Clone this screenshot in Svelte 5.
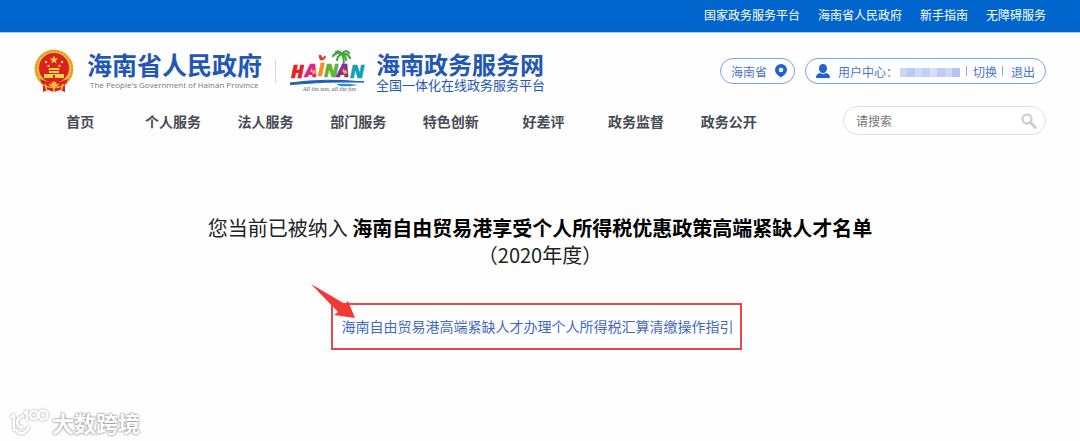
<script>
  let keyword = "";

  const topLinks = ["国家政务服务平台", "海南省人民政府", "新手指南", "无障碍服务"];

  const navItems = [
    "首页",
    "个人服务",
    "法人服务",
    "部门服务",
    "特色创新",
    "好差评",
    "政务监督",
    "政务公开"
  ];

  const letters = [
    { char: "H", x: 1, y: 29, color: "#e5202b" },
    { char: "A", x: 15, y: 28, color: "#e0218a" },
    { char: "I", x: 28, y: 27, color: "#f58a1f" },
    { char: "N", x: 34, y: 28, color: "#5cb531" },
    { char: "A", x: 47, y: 28, color: "#8a2a90" },
    { char: "N", x: 60, y: 29, color: "#12a0b4" }
  ];

  // mosaic over the account name
  const mosaic = ["#c9d6f5", "#bccbf3", "#cfdaf7", "#c3cff3", "#d6e0f8", "#bfcdf2", "#ccd8f6", "#b4c6f1"];
</script>

<div class="topbar">
  {#each topLinks as link}
    <a href="#top">{link}</a>
  {/each}
</div>

<header>
  <div class="brand-row">
    <svg class="emblem" viewBox="0 0 40 44" aria-hidden="true">
      <path d="M9 33 L31 33 L31 43 L26 41 L20 43 L14 41 L9 43 Z" fill="#d8201f" />
      <circle cx="20" cy="20" r="19.5" fill="#e9b53c" />
      <circle cx="20" cy="20" r="18" fill="none" stroke="#c9821d" stroke-width="1" stroke-dasharray="2 1.5" />
      <circle cx="20" cy="19" r="15" fill="#dc1f1f" />
      <path d="M20 6.500l1.100 3h3.200l-2.500 2 .9 3-2.700-1.800-2.700 1.800.9-3-2.500-2h3.200z" fill="#f9d54a" />
      <g fill="#f9d54a">
        <circle cx="12" cy="13" r="1.300" />
        <circle cx="28" cy="13" r="1.300" />
        <circle cx="14.500" cy="17" r="1.200" />
        <circle cx="25.500" cy="17" r="1.200" />
        <path d="M14 21 L15.500 19 H24.500 L26 21 Z" />
        <path d="M15 22 H25 V24 H15 Z" />
        <path d="M10 25 H30 V29 H10 Z" />
      </g>
      <path d="M19 26 H21 V29 H19 Z" fill="#dc1f1f" />
      <path d="M6 30 Q20 37 34 30 L32 35 Q20 40 8 35 Z" fill="#dc1f1f" />
      <path d="M11 35 L13 42 M20 34 V43 M29 35 L27 42 M15 35 Q20 39 25 35" fill="none" stroke="#f3c446" stroke-width="1.500" />
      <circle cx="20" cy="35" r="2.500" fill="#f3c446" />
    </svg>

    <div class="brand gov">
      <strong>海南省人民政府</strong>
      <span>The People's Government of Hainan Province</span>
    </div>

    <svg class="hainan" viewBox="0 0 78 44" role="img" aria-label="Hainan">
      <path d="M0 34 Q36 29 74 33 Q36 32 0 35.500 Z" fill="#1b5fb4" stroke="#1b5fb4" />
      <path d="M46 35 Q56 34 68 36 Q58 38 50 37 Z" fill="#2d8fd0" />
      <path d="M53 17 Q55 11 52 5" fill="none" stroke="#4aa337" stroke-width="2" />
      <path
        d="M52 5 Q47 2 43 7 M52 5 Q48 6 47 11 M52 5 Q55 0 59 4 M52 5 Q58 4 60 9 M52 5 Q56 7 56 11 M52 5 Q49 1 46 3"
        fill="none"
        stroke="#43a83a"
        stroke-width="2.200"
        stroke-linecap="round"
      />
      <path d="M29 9 Q28 5 31 6 L33 9 Q35 5 36 8 Q34 12 30 11 Z" fill="#e43a2a" />
      {#each letters as letter}
        <text class="letter" x={letter.x} y={letter.y} fill={letter.color} stroke={letter.color}>{letter.char}</text>
      {/each}
      <circle cx="24" cy="23" r="2" fill="#f6b21d" />
      <circle cx="55" cy="23" r="2" fill="#f6b21d" />
      <text class="tagline" x="13" y="42">All the sun, all the fun</text>
    </svg>

    <div class="brand service">
      <strong>海南政务服务网</strong>
      <span>全国一体化在线政务服务平台</span>
    </div>

    <div class="account">
      <button class="pill region">
        海南省
        <svg class="pin" viewBox="0 0 12 14" aria-hidden="true">
          <path
            d="M6 0a6 6 0 0 1 6 6c0 3-2.500 5-6 7.500C2.500 11 0 9 0 6a6 6 0 0 1 6-6zM6 3.700a2.300 2.300 0 1 0 0 4.600 2.300 2.300 0 0 0 0-4.600z"
            fill="#1f62d0"
            fill-rule="evenodd"
          />
        </svg>
      </button>
      <div class="pill user">
        <svg class="person" viewBox="0 0 14 14" aria-hidden="true">
          <path
            d="M7 0c2.500 0 4 1.800 4 4.200S9.500 9 7 9 3 6.600 3 4.200 4.500 0 7 0zM0 14c0-3 1.500-4.500 4-5 1.500 1.300 4.500 1.300 6 0 2.500.5 4 2 4 5z"
            fill="#1f62d0"
          />
        </svg>
        <span class="center">用户中心：</span>
        <span class="name">
          {#each mosaic as color}
            <i style="background: {color}"></i>
          {/each}
        </span>
        <span class="bar"></span>
        <a href="#switch">切换</a>
        <span class="bar"></span>
        <a class="exit" href="#exit">退出</a>
      </div>
    </div>
  </div>

  <div class="nav-row">
    <nav>
      {#each navItems as item}
        <a href="#nav">{item}</a>
      {/each}
    </nav>
    <form class="search">
      <input type="text" aria-label="请搜索" placeholder="请搜索" bind:value={keyword} />
      <button type="button" aria-label="搜索">
        <svg viewBox="0 0 16 16">
          <circle cx="6" cy="6" r="4.500" fill="none" stroke="#cfd1d3" stroke-width="2.500" />
          <path d="M9.500 9.500 L14.300 14.300" stroke="#cfd1d3" stroke-width="3.200" stroke-linecap="round" />
        </svg>
      </button>
    </form>
  </div>
</header>

<main>
  <h1>您当前已被纳入 <b>海南自由贸易港享受个人所得税优惠政策高端紧缺人才名单</b><br />（2020年度）</h1>

  <div class="guide">
    <a href="#guide">海南自由贸易港高端紧缺人才办理个人所得税汇算清缴操作指引</a>
    <svg class="arrow" viewBox="0 0 46 36" aria-hidden="true">
      <path d="M0 0 L34 20 L37 17 L44 34 L23 31 L27 28 Z" fill="#f23a35" />
    </svg>
  </div>
</main>

<div class="watermark">
  <svg viewBox="0 0 40 28" aria-hidden="true">
    <g fill="none" stroke="#fff" stroke-width="2.600" stroke-linecap="round" stroke-linejoin="round">
      <path d="M2 9 L5 7 V22" />
      <path d="M14 8 Q8 10 8 15 Q9 19 13 19" />
      <path d="M7 22 Q13 30 20 19" />
      <path d="M16 5 L18 3 V12" />
      <circle cx="25" cy="7" r="4" />
      <circle cx="34" cy="7" r="4.500" />
    </g>
  </svg>
  <span>大数跨境</span>
</div>

<style>
  :global(body) {
    background: #fefefe;
    font-family: "Noto Sans CJK SC", sans-serif;
    font-size: 12px;
  }

  :global(#app) {
    position: relative;
    min-height: 100vh;
  }

  a {
    color: inherit;
    text-decoration: none;
  }

  .topbar {
    display: flex;
    justify-content: flex-end;
    gap: 18px;
    padding: 0 34px 2px;
    line-height: 30px;
    background: #0065cd;
    border-bottom: 1px solid #a9cdf0;
    color: #fff;
  }

  header {
    padding: 15px 34px 0;
  }

  .brand-row {
    display: flex;
    align-items: center;
    height: 46px;
  }

  .emblem {
    width: 40px;
    height: 44px;
  }

  .brand {
    display: flex;
    flex-direction: column;
    color: #2257b5;
    white-space: nowrap;
  }

  .brand strong {
    line-height: 28px;
  }

  .brand span {
    line-height: 14px;
  }

  .gov {
    margin-left: 13px;
    padding-right: 14px;
    background: linear-gradient(#d8d8d8, #d8d8d8) right center / 1px 24px no-repeat;
  }

  .gov strong {
    font-size: 25px;
  }

  .gov span {
    padding-left: 3px;
    font-family: "Open Sans", Arial, sans-serif;
    font-size: 8px;
    color: #777;
  }

  .hainan {
    width: 78px;
    height: 44px;
    margin: 0 8px 0 14px;
  }

  .letter {
    font: italic 800 18px "Open Sans", sans-serif;
    stroke-width: 0.6px;
  }

  .tagline {
    font: italic 6px "Liberation Serif", serif;
    fill: #555;
  }

  .service strong {
    font-size: 24px;
  }

  .service span {
    font-size: 13px;
  }

  .account {
    display: flex;
    gap: 10px;
    margin-left: auto;
  }

  .pill {
    display: flex;
    align-items: center;
    box-sizing: border-box;
    height: 26px;
    border: 1px solid #7ba2e4;
    border-radius: 13px;
    background: #fff;
    font: inherit;
    color: #4a74cc;
    white-space: nowrap;
  }

  .region {
    gap: 8px;
    padding: 0 7px 0 10px;
  }

  .pin {
    width: 12px;
    height: 14px;
  }

  .user {
    padding: 0 10px;
  }

  .person {
    width: 14px;
    height: 14px;
    margin-right: 8px;
  }

  .name {
    display: flex;
    width: 60px;
    height: 9px;
    margin: 2px 6px 0 2px;
  }

  .name i {
    flex: 1;
  }

  .bar {
    width: 1px;
    height: 10px;
    margin-right: 6px;
    background: #8eaae0;
  }

  .user a + .bar {
    margin: 0 8px 0 5px;
  }

  .nav-row {
    display: flex;
    align-items: center;
    gap: 68px;
    margin-top: 12px;
  }

  nav {
    flex: 1;
    display: grid;
    grid-template-columns: repeat(8, 1fr);
    text-align: center;
    font-size: 14px;
    font-weight: bold;
    color: #464b55;
    white-space: nowrap;
  }

  .search {
    display: flex;
    align-items: center;
    box-sizing: border-box;
    width: 203px;
    height: 29px;
    padding: 0 8px 0 12px;
    border: 1px solid #e2e2e2;
    border-radius: 15px;
    background: #fff;
  }

  .search input {
    flex: 1;
    min-width: 0;
    padding: 0;
    border: 0;
    outline: 0;
    background: none;
    font: inherit;
  }

  .search input::placeholder {
    color: #757575;
  }

  .search button {
    display: flex;
    padding: 0;
    border: 0;
    background: none;
  }

  .search svg {
    width: 16px;
    height: 16px;
  }

  main {
    display: flex;
    flex-direction: column;
    align-items: center;
    padding-top: 79px;
  }

  h1 {
    margin: 0;
    font-size: 20px;
    font-weight: normal;
    line-height: 27px;
    text-align: center;
    color: #222;
  }

  h1 b {
    color: #000;
  }

  .guide {
    position: relative;
    margin: 35px 8px 0 0;
    padding: 0 6px 0 9px;
    border: 2px solid #e5484b;
    font-size: 14px;
    line-height: 43px;
    color: #4468c4;
  }

  .arrow {
    position: absolute;
    top: -21px;
    left: -22px;
    width: 46px;
    height: 36px;
  }

  .watermark {
    position: absolute;
    left: 9px;
    bottom: 4px;
    display: flex;
    align-items: center;
    gap: 3px;
    font-size: 22px;
    font-weight: bold;
    line-height: 30px;
    color: #fff;
    text-shadow: 0 0 2px #888, 0 0 3px #aaa;
  }

  .watermark svg {
    width: 40px;
    height: 28px;
    filter: drop-shadow(0 0 1px #999);
  }
</style>
